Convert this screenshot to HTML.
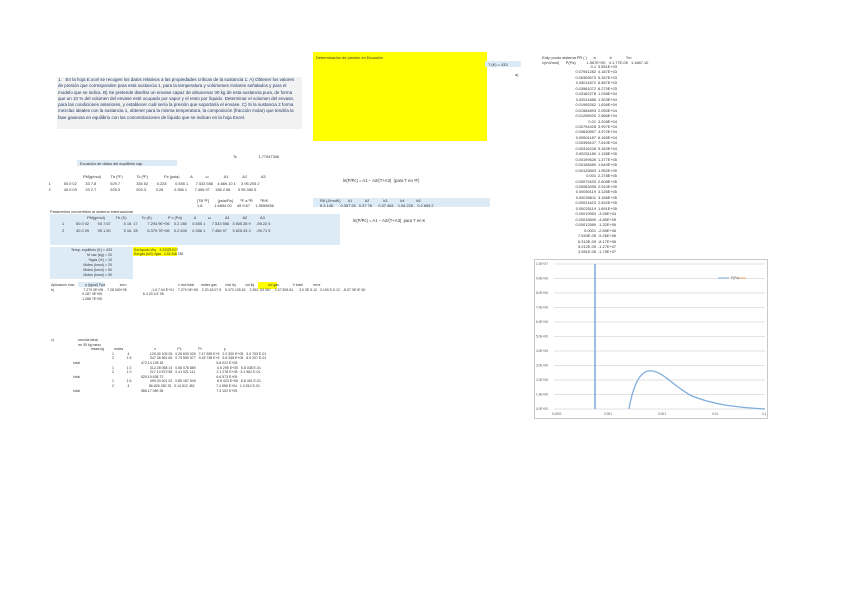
<!DOCTYPE html>
<html><head><meta charset="utf-8"><style>
body{margin:0;width:848px;height:599px;background:#fff;position:relative;overflow:hidden;font-family:"Liberation Sans",sans-serif;font-size:3.9px;color:#333;}
.a{position:absolute;white-space:nowrap;}
.bl{background:#ddebf7;position:absolute;}
.ye{background:#ffff00;position:absolute;}
</style></head><body>
<div class="a" style="left:57px;top:77px;width:245px;height:52px;background:#f2f2f2;"></div>
<div class="a" style="left:58px;top:77px;color:#1f3864;font-size:4.5px;line-height:6.3px;white-space:normal;width:242px;">1.&nbsp;&nbsp; En la hoja E.xcel se recogen los datos relativos a las propiedades críticas de la sustancia 1. A) Obtener los valores de presión que corresponden para esta sustancia 1, para la temperatura y volúmenes molares señalados y para el modelo que se indica. B) Se pretende diseñar un envase capaz de almacenar 30 kg de esta sustancia pura, de forma que un 10 % del volumen del envase esté ocupado por vapor y el resto por líquido. Determinar el volumen del envase, para las condiciones anteriores, y establecer cuál sería la presión que soportaría el envase. C) Si la sustancia 2 forma mezclas ideales con la sustancia 1, obtener para la misma temperatura, la composición (fracción molar) que tendría la fase gaseosa en equilibrio con las concentraciones de líquido que se indican en la hoja Excel.</div>
<div class="ye" style="left:313px;top:52px;width:174px;height:89px;"></div>
<div class="a" style="left:316px;top:55px;">Determinación de presión en Ecuación</div>
<div class="bl" style="left:485px;top:61px;width:36px;height:6px;"></div>
<div class="a" style="left:488px;top:62px;">T (K) = 433</div>
<div class="a" style="left:515px;top:72px;">a)</div>
<div class="a" style="left:542px;top:55px;">Eclip punto sistema PR ( ) &nbsp;&nbsp;&nbsp;&nbsp; a &nbsp;&nbsp;&nbsp;&nbsp;&nbsp;&nbsp;&nbsp;&nbsp;&nbsp;&nbsp;&nbsp; b &nbsp;&nbsp;&nbsp;&nbsp;&nbsp;&nbsp;&nbsp;&nbsp;&nbsp;&nbsp;&nbsp; Tm</div>
<div class="a" style="left:542px;top:60px;">v(m3/mol) &nbsp;&nbsp;&nbsp;&nbsp; P(Pa) &nbsp;&nbsp;&nbsp;&nbsp;&nbsp;&nbsp;&nbsp;&nbsp; 1.567E+00 &nbsp; 4.1.77E-05 &nbsp; 1.1687.10</div>
<div class="a" style="left:540px;top:64px;line-height:5.45px;text-align:right;width:56px;">0.1<br>0.07941282<br>0.06309573<br>0.05011872<br>0.03981072<br>0.03162278<br>0.02511886<br>0.01995262<br>0.01584893<br>0.01258925<br>0.01<br>0.00794328<br>0.00630957<br>0.00501187<br>0.00398107<br>0.00316228<br>0.00251189<br>0.00199526<br>0.00158489<br>0.00125893<br>0.001<br>0.00079433<br>0.00063096<br>0.00050119<br>0.00039811<br>0.00031623<br>0.00025119<br>0.00019953<br>0.00015849<br>0.00012589<br>0.0001<br>7.943E-05<br>6.310E-05<br>5.012E-05<br>3.981E-05</div>
<div class="a" style="left:598px;top:64px;line-height:5.45px;">3.551E+03<br>4.187E+03<br>5.267E+03<br>6.587E+03<br>8.270E+03<br>1.038E+04<br>1.303E+04<br>1.636E+04<br>2.050E+04<br>2.566E+04<br>3.208E+04<br>3.997E+04<br>4.972E+04<br>6.165E+04<br>7.610E+04<br>9.340E+04<br>1.138E+05<br>1.377E+05<br>1.649E+05<br>1.952E+05<br>2.278E+05<br>2.608E+05<br>2.910E+05<br>3.126E+05<br>3.156E+05<br>2.832E+05<br>1.891E+05<br>-3.26E+04<br>-4.80E+05<br>-1.32E+06<br>-2.85E+06<br>-5.26E+06<br>-8.17E+06<br>-1.27E+07<br>-1.79E+07</div>
<div class="a" style="left:233px;top:154px;">Tc &nbsp;&nbsp;&nbsp;&nbsp;&nbsp;&nbsp;&nbsp;&nbsp;&nbsp;&nbsp;&nbsp;&nbsp;&nbsp;&nbsp;&nbsp;&nbsp;&nbsp;&nbsp; 1.77947306</div>
<div class="bl" style="left:77px;top:160px;width:100px;height:6px;"></div>
<div class="a" style="left:80px;top:161px;">Ecuación de datos del equilibrio vap</div>
<div class="a" style="left:40px;top:174px;line-height:6.5px;">
<span style="margin-left:43px">PM(g/mol) &nbsp;&nbsp;&nbsp;&nbsp;&nbsp;&nbsp;&nbsp; Tb (ºF) &nbsp;&nbsp;&nbsp;&nbsp;&nbsp;&nbsp;&nbsp;&nbsp;&nbsp;&nbsp;&nbsp; Tc (ºF) &nbsp;&nbsp;&nbsp;&nbsp;&nbsp;&nbsp;&nbsp;&nbsp;&nbsp;&nbsp;&nbsp;&nbsp;&nbsp; Pc (psia) &nbsp;&nbsp;&nbsp;&nbsp;&nbsp;&nbsp;&nbsp;&nbsp; A &nbsp;&nbsp;&nbsp;&nbsp;&nbsp;&nbsp;&nbsp;&nbsp;&nbsp;&nbsp; ω &nbsp;&nbsp;&nbsp;&nbsp;&nbsp;&nbsp;&nbsp;&nbsp;&nbsp;&nbsp;&nbsp;&nbsp; A1 &nbsp;&nbsp;&nbsp;&nbsp;&nbsp;&nbsp;&nbsp;&nbsp;&nbsp;&nbsp;&nbsp; A2 &nbsp;&nbsp;&nbsp;&nbsp;&nbsp;&nbsp;&nbsp;&nbsp;&nbsp;&nbsp;&nbsp; A3</span><br>
&nbsp;&nbsp;&nbsp;&nbsp;&nbsp;&nbsp;&nbsp; 1 &nbsp;&nbsp;&nbsp;&nbsp;&nbsp;&nbsp;&nbsp;&nbsp;&nbsp;&nbsp; 50.0 02 &nbsp;&nbsp;&nbsp;&nbsp;&nbsp;&nbsp; 33 7.8 &nbsp;&nbsp;&nbsp;&nbsp;&nbsp;&nbsp;&nbsp;&nbsp;&nbsp;&nbsp;&nbsp; 929.7 &nbsp;&nbsp;&nbsp;&nbsp;&nbsp;&nbsp;&nbsp;&nbsp;&nbsp;&nbsp;&nbsp;&nbsp;&nbsp; 335 52 &nbsp;&nbsp;&nbsp;&nbsp;&nbsp;&nbsp; 0.228 &nbsp;&nbsp;&nbsp;&nbsp;&nbsp;&nbsp; 0.555 1 &nbsp;&nbsp;&nbsp;&nbsp;&nbsp; 7.533 556 &nbsp;&nbsp; 4.669.10 1 &nbsp;&nbsp;&nbsp; 3 95.205 2<br>
&nbsp;&nbsp;&nbsp;&nbsp;&nbsp;&nbsp;&nbsp; 2 &nbsp;&nbsp;&nbsp;&nbsp;&nbsp;&nbsp;&nbsp;&nbsp;&nbsp;&nbsp; 40.0 09 &nbsp;&nbsp;&nbsp;&nbsp;&nbsp;&nbsp; 33 2.7 &nbsp;&nbsp;&nbsp;&nbsp;&nbsp;&nbsp;&nbsp;&nbsp;&nbsp;&nbsp;&nbsp; 929.3 &nbsp;&nbsp;&nbsp;&nbsp;&nbsp;&nbsp;&nbsp;&nbsp;&nbsp;&nbsp;&nbsp;&nbsp;&nbsp; 929.3 &nbsp;&nbsp;&nbsp;&nbsp;&nbsp;&nbsp;&nbsp; 0.26 &nbsp;&nbsp;&nbsp;&nbsp;&nbsp;&nbsp;&nbsp;&nbsp; 0.356 1 &nbsp;&nbsp;&nbsp;&nbsp;&nbsp; 7.456 97 &nbsp;&nbsp;&nbsp; 158 2.56 &nbsp;&nbsp;&nbsp;&nbsp;&nbsp; 3 95.380 5</div>
<div class="a" style="left:343px;top:178px;font-size:4.2px;">ln(P/Pc) = A1 − A2/(T+A3) &nbsp;(para T en ºF)</div>
<div class="a" style="left:197px;top:199px;line-height:4.5px;">[TB ºF] &nbsp;&nbsp;&nbsp;&nbsp;&nbsp;&nbsp; [psia/Pa] &nbsp;&nbsp;&nbsp;&nbsp;&nbsp; ºF a ºR &nbsp;&nbsp;&nbsp;&nbsp;&nbsp; ºR/K<br>1.8 &nbsp;&nbsp;&nbsp;&nbsp;&nbsp;&nbsp;&nbsp;&nbsp;&nbsp; 1.6894.00 &nbsp;&nbsp;&nbsp; 45 9.67 &nbsp;&nbsp;&nbsp; 1.5555556</div>
<div class="bl" style="left:313px;top:198px;width:177px;height:9px;"></div>
<div class="a" style="left:320px;top:199px;line-height:4.5px;">R8 (J/molK) &nbsp;&nbsp;&nbsp;&nbsp;&nbsp; k1 &nbsp;&nbsp;&nbsp;&nbsp;&nbsp;&nbsp;&nbsp;&nbsp;&nbsp;&nbsp; k2 &nbsp;&nbsp;&nbsp;&nbsp;&nbsp;&nbsp;&nbsp;&nbsp;&nbsp;&nbsp;&nbsp; k3 &nbsp;&nbsp;&nbsp;&nbsp;&nbsp;&nbsp;&nbsp;&nbsp;&nbsp;&nbsp; k4 &nbsp;&nbsp;&nbsp;&nbsp;&nbsp;&nbsp;&nbsp;&nbsp;&nbsp; k5<br>8.3 145 &nbsp;&nbsp;&nbsp;&nbsp;&nbsp; 0.357 26 &nbsp; 0.37 78 &nbsp;&nbsp;&nbsp;&nbsp; 0.37 464 &nbsp;&nbsp; 1.54 226 &nbsp;&nbsp; 0.2 699 2</div>
<div class="a" style="left:50px;top:209px;">Parámetros convertidos al sistema internacional</div>
<div class="bl" style="left:50px;top:214px;width:290px;height:31px;"></div>
<div class="a" style="left:62px;top:215px;line-height:6.3px;">
<span style="margin-left:25px">PM(g/mol) &nbsp;&nbsp;&nbsp;&nbsp;&nbsp;&nbsp;&nbsp;&nbsp; Tb (K) &nbsp;&nbsp;&nbsp;&nbsp;&nbsp;&nbsp;&nbsp;&nbsp;&nbsp;&nbsp;&nbsp;&nbsp; Tc (K) &nbsp;&nbsp;&nbsp;&nbsp;&nbsp;&nbsp;&nbsp;&nbsp;&nbsp;&nbsp;&nbsp;&nbsp;&nbsp; P c (Pa) &nbsp;&nbsp;&nbsp;&nbsp;&nbsp;&nbsp;&nbsp;&nbsp;&nbsp; A &nbsp;&nbsp;&nbsp;&nbsp;&nbsp;&nbsp;&nbsp;&nbsp;&nbsp; ω &nbsp;&nbsp;&nbsp;&nbsp;&nbsp;&nbsp;&nbsp;&nbsp;&nbsp;&nbsp;&nbsp; A1 &nbsp;&nbsp;&nbsp;&nbsp;&nbsp;&nbsp;&nbsp;&nbsp;&nbsp;&nbsp; A2 &nbsp;&nbsp;&nbsp;&nbsp;&nbsp;&nbsp;&nbsp;&nbsp;&nbsp;&nbsp; A3</span><br>
1 &nbsp;&nbsp;&nbsp;&nbsp;&nbsp;&nbsp;&nbsp;&nbsp;&nbsp; 50.0 02 &nbsp;&nbsp;&nbsp;&nbsp;&nbsp;&nbsp; 93 7.67 &nbsp;&nbsp;&nbsp;&nbsp;&nbsp;&nbsp;&nbsp;&nbsp;&nbsp;&nbsp; 5 15. 17 &nbsp;&nbsp;&nbsp;&nbsp;&nbsp;&nbsp;&nbsp; 7.293.9E+06 &nbsp;&nbsp; 0.2 280 &nbsp;&nbsp;&nbsp; 0.555 1 &nbsp;&nbsp;&nbsp;&nbsp; 7.533 556 &nbsp; 3 505.38 9 &nbsp;&nbsp;&nbsp; -95.22 5<br>
2 &nbsp;&nbsp;&nbsp;&nbsp;&nbsp;&nbsp;&nbsp;&nbsp;&nbsp; 40.0 09 &nbsp;&nbsp;&nbsp;&nbsp;&nbsp;&nbsp; 95 1.50 &nbsp;&nbsp;&nbsp;&nbsp;&nbsp;&nbsp;&nbsp;&nbsp;&nbsp;&nbsp; 5 16. 28 &nbsp;&nbsp;&nbsp;&nbsp;&nbsp;&nbsp;&nbsp; 6.379.7E+06 &nbsp;&nbsp; 0.2 600 &nbsp;&nbsp;&nbsp; 0.356 1 &nbsp;&nbsp;&nbsp;&nbsp; 7.456 97 &nbsp;&nbsp;&nbsp; 3 625.33 3 &nbsp;&nbsp;&nbsp; -95.71 5</div>
<div class="a" style="left:353px;top:218px;font-size:4.2px;">ln(P/Pc) = A1 − A2/(T+A3) &nbsp;para T en K</div>
<div class="bl" style="left:50px;top:247px;width:83px;height:32px;"></div>
<div class="a" style="left:52px;top:248px;line-height:5.1px;text-align:right;width:60px;font-size:3.6px;">Temp. equilibrio (K) = 433<br>M vac (kg) = 20<br>%gas (%) = 10<br>Moles (kmol) = 20<br>Moles (kmol) = 50<br>Moles (kmol) = 90</div>
<div class="ye" style="left:133px;top:247px;width:44px;height:9px;"></div>
<div class="a" style="left:134px;top:248px;line-height:4.3px;font-size:3.3px;">Sol líquido Vliq &nbsp;&nbsp; 3.33329 E07<br>Sol gas (m3) Vgas &nbsp; 3.33 348 338</div>
<div class="bl" style="left:78px;top:282px;width:27px;height:5px;"></div>
<div class="ye" style="left:258px;top:282px;width:19px;height:7px;"></div>
<div class="a" style="left:51px;top:283px;line-height:4.5px;font-size:3.5px;">Aplicación mav &nbsp;&nbsp;&nbsp;&nbsp;&nbsp;&nbsp;&nbsp;&nbsp;&nbsp; p (Igual) Fpa &nbsp;&nbsp;&nbsp;&nbsp;&nbsp;&nbsp;&nbsp;&nbsp;&nbsp;&nbsp;&nbsp;&nbsp;&nbsp; zero &nbsp;&nbsp;&nbsp;&nbsp;&nbsp;&nbsp;&nbsp;&nbsp;&nbsp;&nbsp;&nbsp;&nbsp;&nbsp;&nbsp;&nbsp;&nbsp;&nbsp;&nbsp;&nbsp;&nbsp;&nbsp;&nbsp;&nbsp;&nbsp;&nbsp;&nbsp;&nbsp;&nbsp;&nbsp;&nbsp;&nbsp;&nbsp;&nbsp;&nbsp;&nbsp;&nbsp;&nbsp;&nbsp;&nbsp;&nbsp;&nbsp;&nbsp;&nbsp;&nbsp;&nbsp;&nbsp;&nbsp;&nbsp;&nbsp;&nbsp;&nbsp; v mol total &nbsp;&nbsp;&nbsp;&nbsp;&nbsp; moles gas &nbsp;&nbsp;&nbsp;&nbsp;&nbsp;&nbsp;&nbsp; mol liq &nbsp;&nbsp;&nbsp;&nbsp;&nbsp;&nbsp;&nbsp;&nbsp; vol liq &nbsp;&nbsp;&nbsp;&nbsp;&nbsp;&nbsp;&nbsp;&nbsp;&nbsp;&nbsp;&nbsp;&nbsp; vol gas &nbsp;&nbsp;&nbsp;&nbsp;&nbsp;&nbsp;&nbsp;&nbsp;&nbsp;&nbsp;&nbsp;&nbsp; V total &nbsp;&nbsp;&nbsp;&nbsp;&nbsp;&nbsp;&nbsp;&nbsp;&nbsp; error<br>
b) &nbsp;&nbsp;&nbsp;&nbsp;&nbsp;&nbsp;&nbsp;&nbsp;&nbsp;&nbsp;&nbsp;&nbsp;&nbsp;&nbsp;&nbsp;&nbsp;&nbsp;&nbsp;&nbsp;&nbsp;&nbsp;&nbsp;&nbsp;&nbsp;&nbsp;&nbsp;&nbsp;&nbsp; 7.279 0E+05 &nbsp;&nbsp; 7.28 000+05 &nbsp;&nbsp;&nbsp;&nbsp;&nbsp;&nbsp;&nbsp;&nbsp;&nbsp;&nbsp;&nbsp;&nbsp;&nbsp;&nbsp;&nbsp;&nbsp;&nbsp;&nbsp;&nbsp;&nbsp;&nbsp;&nbsp;&nbsp; -1.6 7.94 E+01 &nbsp;&nbsp; 7.279 0E+05 &nbsp;&nbsp; 3 20.18 07 5 &nbsp;&nbsp; 5.370 105 52 &nbsp;&nbsp; 3 353 .53 087 &nbsp;&nbsp; 0.37 893 81 &nbsp;&nbsp;&nbsp;&nbsp; 3.0 3E 5.12 &nbsp; 3.199 E-5 12 &nbsp; -8.07 3E+E 50<br>
&nbsp;&nbsp;&nbsp;&nbsp;&nbsp;&nbsp;&nbsp;&nbsp;&nbsp;&nbsp;&nbsp;&nbsp;&nbsp;&nbsp;&nbsp;&nbsp;&nbsp;&nbsp;&nbsp;&nbsp;&nbsp;&nbsp;&nbsp;&nbsp;&nbsp;&nbsp;&nbsp;&nbsp;&nbsp;&nbsp;&nbsp; 9.187 0E+05 &nbsp;&nbsp;&nbsp;&nbsp;&nbsp;&nbsp;&nbsp;&nbsp;&nbsp;&nbsp;&nbsp;&nbsp;&nbsp;&nbsp;&nbsp;&nbsp;&nbsp;&nbsp;&nbsp;&nbsp;&nbsp;&nbsp;&nbsp;&nbsp;&nbsp;&nbsp;&nbsp;&nbsp;&nbsp;&nbsp;&nbsp;&nbsp;&nbsp;&nbsp;&nbsp;&nbsp;&nbsp;&nbsp;&nbsp;&nbsp; 6.4 29 4.E 05<br>
&nbsp;&nbsp;&nbsp;&nbsp;&nbsp;&nbsp;&nbsp;&nbsp;&nbsp;&nbsp;&nbsp;&nbsp;&nbsp;&nbsp;&nbsp;&nbsp;&nbsp;&nbsp;&nbsp;&nbsp;&nbsp;&nbsp;&nbsp;&nbsp;&nbsp;&nbsp;&nbsp;&nbsp;&nbsp;&nbsp;&nbsp; 1.286 7E+05</div>
<div class="a" style="left:51px;top:338px;line-height:4.6px;font-size:3.5px;">
c) &nbsp;&nbsp;&nbsp;&nbsp;&nbsp;&nbsp;&nbsp;&nbsp;&nbsp;&nbsp;&nbsp;&nbsp;&nbsp;&nbsp;&nbsp;&nbsp;&nbsp;&nbsp;&nbsp;&nbsp;&nbsp;&nbsp;&nbsp; mezcla ideal<br>
&nbsp;&nbsp;&nbsp;&nbsp;&nbsp;&nbsp;&nbsp;&nbsp;&nbsp;&nbsp;&nbsp;&nbsp;&nbsp;&nbsp;&nbsp;&nbsp;&nbsp;&nbsp;&nbsp;&nbsp;&nbsp;&nbsp;&nbsp;&nbsp;&nbsp;&nbsp;&nbsp; en 30 kg mezc<br>
&nbsp;&nbsp;&nbsp;&nbsp;&nbsp;&nbsp;&nbsp;&nbsp;&nbsp;&nbsp;&nbsp;&nbsp;&nbsp;&nbsp;&nbsp;&nbsp;&nbsp;&nbsp;&nbsp;&nbsp;&nbsp;&nbsp;&nbsp;&nbsp;&nbsp;&nbsp;&nbsp;&nbsp;&nbsp;&nbsp;&nbsp;&nbsp;&nbsp;&nbsp;&nbsp;&nbsp;&nbsp;&nbsp;&nbsp;&nbsp; masa kg &nbsp;&nbsp;&nbsp;&nbsp;&nbsp;&nbsp;&nbsp;&nbsp; moles &nbsp;&nbsp;&nbsp;&nbsp;&nbsp;&nbsp;&nbsp;&nbsp;&nbsp;&nbsp;&nbsp;&nbsp;&nbsp;&nbsp;&nbsp;&nbsp;&nbsp;&nbsp;&nbsp;&nbsp;&nbsp;&nbsp;&nbsp;&nbsp;&nbsp;&nbsp;&nbsp;&nbsp;&nbsp;&nbsp; x &nbsp;&nbsp;&nbsp;&nbsp;&nbsp;&nbsp;&nbsp;&nbsp;&nbsp;&nbsp;&nbsp;&nbsp;&nbsp;&nbsp;&nbsp;&nbsp;&nbsp;&nbsp;&nbsp;&nbsp; P1 &nbsp;&nbsp;&nbsp;&nbsp;&nbsp;&nbsp;&nbsp;&nbsp;&nbsp;&nbsp;&nbsp;&nbsp;&nbsp;&nbsp;&nbsp; Pt &nbsp;&nbsp;&nbsp;&nbsp;&nbsp;&nbsp;&nbsp;&nbsp;&nbsp;&nbsp;&nbsp;&nbsp;&nbsp;&nbsp;&nbsp;&nbsp;&nbsp;&nbsp;&nbsp;&nbsp;&nbsp; y<br>
<span style="margin-left:61px">1 &nbsp;&nbsp;&nbsp;&nbsp;&nbsp;&nbsp;&nbsp;&nbsp;&nbsp;&nbsp;&nbsp;&nbsp; 4 &nbsp;&nbsp;&nbsp;&nbsp;&nbsp;&nbsp;&nbsp;&nbsp;&nbsp;&nbsp;&nbsp;&nbsp;&nbsp;&nbsp;&nbsp;&nbsp;&nbsp;&nbsp;&nbsp; 126.49 105 26 &nbsp; 0.26 633 029 &nbsp; 7.47 998 E+5 &nbsp; 2.0 300 E+05 &nbsp; 3.4 793 E-01</span><br>
<span style="margin-left:61px">2 &nbsp;&nbsp;&nbsp;&nbsp;&nbsp;&nbsp;&nbsp;&nbsp;&nbsp;&nbsp;&nbsp; 1 6 &nbsp;&nbsp;&nbsp;&nbsp;&nbsp;&nbsp;&nbsp;&nbsp;&nbsp;&nbsp;&nbsp;&nbsp;&nbsp;&nbsp;&nbsp;&nbsp;&nbsp; 347.36 552 65 &nbsp; 0.73 550 577 &nbsp; 9.18 738 E+5 &nbsp; 5.8 255 E+05 &nbsp; 6.5 207 E-01</span><br>
&nbsp;&nbsp;&nbsp;&nbsp;&nbsp;&nbsp;&nbsp;&nbsp;&nbsp;&nbsp;&nbsp;&nbsp;&nbsp;&nbsp;&nbsp;&nbsp;&nbsp;&nbsp;&nbsp;&nbsp;&nbsp;&nbsp; total <span style="margin-left:60px">472.14 128 18</span> <span style="margin-left:52px">5.8 022 E+05</span><br>
<span style="margin-left:61px">1 &nbsp;&nbsp;&nbsp;&nbsp;&nbsp;&nbsp;&nbsp;&nbsp;&nbsp;&nbsp;&nbsp; 1 0 &nbsp;&nbsp;&nbsp;&nbsp;&nbsp;&nbsp;&nbsp;&nbsp;&nbsp;&nbsp;&nbsp;&nbsp;&nbsp;&nbsp;&nbsp;&nbsp;&nbsp; 312.28 058 14 &nbsp; 0.58 078 889 &nbsp;&nbsp;&nbsp;&nbsp;&nbsp;&nbsp;&nbsp;&nbsp;&nbsp;&nbsp;&nbsp;&nbsp;&nbsp;&nbsp;&nbsp;&nbsp;&nbsp;&nbsp;&nbsp;&nbsp; 4.5 295 E+05 &nbsp; 6.8 038 E-01</span><br>
<span style="margin-left:61px">2 &nbsp;&nbsp;&nbsp;&nbsp;&nbsp;&nbsp;&nbsp;&nbsp;&nbsp;&nbsp;&nbsp; 1 0 &nbsp;&nbsp;&nbsp;&nbsp;&nbsp;&nbsp;&nbsp;&nbsp;&nbsp;&nbsp;&nbsp;&nbsp;&nbsp;&nbsp;&nbsp;&nbsp;&nbsp; 217.10 573 58 &nbsp; 0.41 021 111 &nbsp;&nbsp;&nbsp;&nbsp;&nbsp;&nbsp;&nbsp;&nbsp;&nbsp;&nbsp;&nbsp;&nbsp;&nbsp;&nbsp;&nbsp;&nbsp;&nbsp;&nbsp;&nbsp;&nbsp; 2.1 278 E+05 &nbsp; 3.1 962 E-01</span><br>
&nbsp;&nbsp;&nbsp;&nbsp;&nbsp;&nbsp;&nbsp;&nbsp;&nbsp;&nbsp;&nbsp;&nbsp;&nbsp;&nbsp;&nbsp;&nbsp;&nbsp;&nbsp;&nbsp;&nbsp;&nbsp;&nbsp; total <span style="margin-left:60px">529.19 638 72</span> <span style="margin-left:52px">6.6 573 E+05</span><br>
<span style="margin-left:61px">1 &nbsp;&nbsp;&nbsp;&nbsp;&nbsp;&nbsp;&nbsp;&nbsp;&nbsp;&nbsp;&nbsp; 1 6 &nbsp;&nbsp;&nbsp;&nbsp;&nbsp;&nbsp;&nbsp;&nbsp;&nbsp;&nbsp;&nbsp;&nbsp;&nbsp;&nbsp;&nbsp;&nbsp;&nbsp; 499.34 401 02 &nbsp; 0.85 187 549 &nbsp;&nbsp;&nbsp;&nbsp;&nbsp;&nbsp;&nbsp;&nbsp;&nbsp;&nbsp;&nbsp;&nbsp;&nbsp;&nbsp;&nbsp;&nbsp;&nbsp;&nbsp;&nbsp;&nbsp; 6.5 423 E+05 &nbsp; 8.8 491 E-01</span><br>
<span style="margin-left:61px">2 &nbsp;&nbsp;&nbsp;&nbsp;&nbsp;&nbsp;&nbsp;&nbsp;&nbsp;&nbsp;&nbsp;&nbsp; 4 &nbsp;&nbsp;&nbsp;&nbsp;&nbsp;&nbsp;&nbsp;&nbsp;&nbsp;&nbsp;&nbsp;&nbsp;&nbsp;&nbsp;&nbsp;&nbsp;&nbsp;&nbsp; 86.826 282 32 &nbsp; 0.14 812 452 &nbsp;&nbsp;&nbsp;&nbsp;&nbsp;&nbsp;&nbsp;&nbsp;&nbsp;&nbsp;&nbsp;&nbsp;&nbsp;&nbsp;&nbsp;&nbsp;&nbsp;&nbsp;&nbsp;&nbsp; 7.4 856 E+04 &nbsp; 1.0 510 E-01</span><br>
&nbsp;&nbsp;&nbsp;&nbsp;&nbsp;&nbsp;&nbsp;&nbsp;&nbsp;&nbsp;&nbsp;&nbsp;&nbsp;&nbsp;&nbsp;&nbsp;&nbsp;&nbsp;&nbsp;&nbsp;&nbsp;&nbsp; total <span style="margin-left:60px">586.17 089 35</span> <span style="margin-left:52px">7.3 102 E+05</span></div>
<svg class="a" style="left:534px;top:259px" width="234" height="160" viewBox="0 0 234 160">
<rect x="0.5" y="0.5" width="233" height="159" fill="#fff" stroke="#c8c8c8"/>
<g stroke="#d9d9d9" stroke-width="0.8">
<line x1="20" y1="5" x2="231" y2="5"/><line x1="20" y1="19.5" x2="231" y2="19.5"/><line x1="20" y1="34" x2="231" y2="34"/><line x1="20" y1="48.5" x2="231" y2="48.5"/><line x1="20" y1="63" x2="231" y2="63"/><line x1="20" y1="77.5" x2="231" y2="77.5"/><line x1="20" y1="92" x2="231" y2="92"/><line x1="20" y1="106.5" x2="231" y2="106.5"/><line x1="20" y1="121" x2="231" y2="121"/><line x1="20" y1="135.5" x2="231" y2="135.5"/><line x1="20" y1="150" x2="231" y2="150"/>
</g>
<g font-size="3.2" fill="#555" font-family="Liberation Sans">
<text x="2" y="6">1.0E+07</text><text x="2" y="20.5">9.0E+06</text><text x="2" y="35">8.0E+06</text><text x="2" y="49.5">7.0E+06</text><text x="2" y="64">6.0E+06</text><text x="2" y="78.5">5.0E+06</text><text x="2" y="93">4.0E+06</text><text x="2" y="107.5">3.0E+06</text><text x="2" y="122">2.0E+06</text><text x="2" y="136.5">1.0E+06</text><text x="2" y="151">0.0E+00</text>
<text x="18" y="156">0.0001</text><text x="70" y="156">0.001</text><text x="124" y="156">0.001</text><text x="178" y="156">0.01</text><text x="228" y="156">0.1</text>
<text x="197" y="20">P(Pa)</text>
</g>
<line x1="184" y1="19" x2="195" y2="19" stroke="#7fadde" stroke-width="1"/>
<line x1="205" y1="19" x2="212" y2="19" stroke="#f4a460" stroke-width="1"/>
<path d="M61 5 L61 150" stroke="#7fadde" stroke-width="1.6" fill="none"/>
<path d="M95 150 C98 132 104 114 114 112 C128 110 138 127 158 137 C178 145 198 148 231 150" stroke="#7fadde" stroke-width="1.3" fill="none"/>
</svg>
</body></html>
